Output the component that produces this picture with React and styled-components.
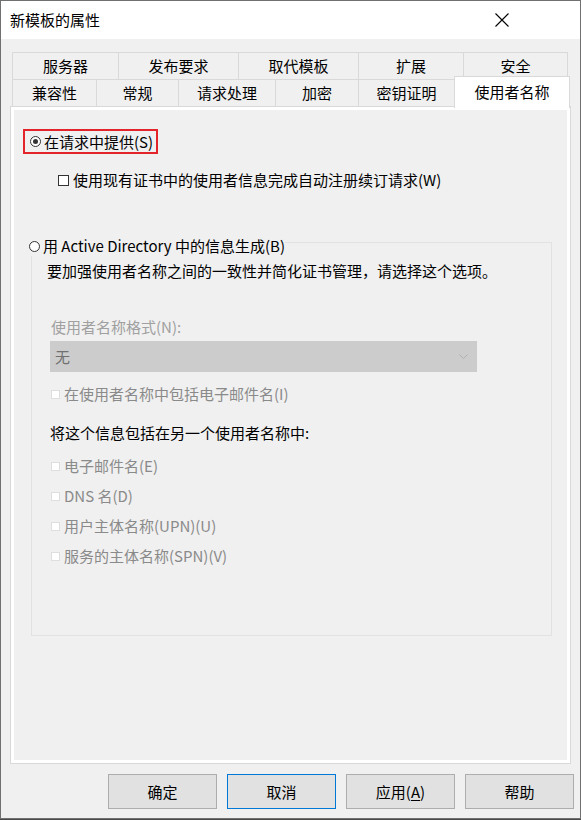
import React from 'react';
import styled, { createGlobalStyle } from 'styled-components';

const GlobalStyle = createGlobalStyle`
  html, body {
    margin: 0;
    padding: 0;
    background: #4a4a4a;
  }
  body {
    font-family: "Noto Sans CJK SC", "Noto Sans", sans-serif;
    font-size: 15px;
    color: #000;
  }
  * {
    box-sizing: border-box;
  }
`;

// Window chrome

const Window = styled.div`
  width: 581px;
  height: 819px;
  border: 1px solid #707070;
  background: #f0f0f0;
  display: flex;
  flex-direction: column;
`;

const TitleBar = styled.div`
  height: 38px;
  background: #fff;
  display: flex;
  align-items: center;
  justify-content: space-between;
  padding: 0 0 0 9px;
  line-height: 20px;
`;

const CloseButton = styled.div`
  width: 46px;
  height: 38px;
  display: flex;
  align-items: center;
  justify-content: center;
  margin-right: 55px;
`;

const Body = styled.div`
  flex: 1;
  padding: 13px 9px 0 9px;
  display: flex;
  flex-direction: column;
`;

// Tabs

const TabStrip = styled.div`
  margin-left: 2px;
  display: flex;
  flex-direction: column;
`;

const TabRow = styled.div`
  display: flex;
  align-items: flex-start;
  margin-top: ${(p) => (p.$first ? '0' : '-1px')};
`;

const Tab = styled.div`
  width: ${(p) => p.$w}px;
  height: 28px;
  margin-left: ${(p) => (p.$first ? '0' : '-1px')};
  border: 1px solid #d9d9d9;
  background: #f0f0f0;
  display: flex;
  align-items: center;
  justify-content: center;
  line-height: 20px;
  white-space: nowrap;
`;

const ActiveTab = styled(Tab)`
  position: relative;
  z-index: 2;
  height: 32px;
  margin-top: -3px;
  margin-bottom: -1px;
  background: #fff;
  border-bottom: none;
  padding-bottom: 1px;
`;

// Page

const Panel = styled.div`
  margin-top: -1px;
  height: 658px;
  border: 1px solid #d9d9d9;
  box-shadow: inset 0 0 0 3px #fff;
  background: #f0f0f0;
  padding: 22px 0 0 12px;
  display: flex;
  flex-direction: column;
  align-items: flex-start;
`;

const Highlight = styled.div`
  border: 2px solid #e3242b;
  height: 25px;
  width: 135px;
  padding-left: 5px;
  display: flex;
  align-items: center;
`;

const Choice = styled.label`
  display: flex;
  align-items: center;
  gap: ${(p) => p.$gap || 3}px;
  line-height: 20px;
  height: 20px;
  white-space: nowrap;
  color: ${(p) => (p.$disabled ? '#8a8a8a' : '#000')};
  margin-left: ${(p) => p.$indent || 0}px;
  margin-top: ${(p) => p.$top || 0}px;
`;

const Radio = styled.span`
  width: 11px;
  height: 11px;
  border-radius: 50%;
  border: 1px solid #333;
  background: #fff;
  display: flex;
  align-items: center;
  justify-content: center;
  flex: none;

  &::after {
    content: '';
    width: 5px;
    height: 5px;
    border-radius: 50%;
    background: ${(p) => (p.$checked ? '#333' : 'transparent')};
  }
`;

const Box = styled.span`
  width: ${(p) => (p.$disabled ? 9 : 11)}px;
  height: ${(p) => (p.$disabled ? 9 : 11)}px;
  border: 1px solid ${(p) => (p.$disabled ? '#dedede' : '#333')};
  background: #fff;
  flex: none;
`;

const GroupBox = styled.fieldset`
  margin: 38px 0 0 8px;
  padding: 0;
  width: 521px;
  border: 1px solid #e2e2e2;
  min-inline-size: 0;
`;

const GroupLegend = styled.legend`
  padding: 8px 0 0 0;
  margin-left: -3px;
  background: #f0f0f0;
`;

const GroupBody = styled.div`
  padding: 5px 0 69px 19px;
  display: flex;
  flex-direction: column;
  align-items: flex-start;
`;

const Text = styled.div`
  line-height: 20px;
  height: 20px;
  white-space: nowrap;
  color: ${(p) => (p.$disabled ? '#a0a0a0' : '#000')};
  margin-left: ${(p) => p.$indent || 0}px;
  margin-top: ${(p) => p.$top || 0}px;
`;

const Select = styled.div`
  margin: 4px 0 0 -1px;
  width: 427px;
  height: 31px;
  background: #cccccc;
  color: #707070;
  display: flex;
  align-items: center;
  justify-content: space-between;
  padding: 0 9px 0 5px;
  line-height: 20px;
`;

const CheckList = styled.div`
  margin-top: 13px;
  display: flex;
  flex-direction: column;
  gap: 10px;
`;

// Buttons

const ButtonRow = styled.div`
  margin: 10px -3px 0 0;
  display: flex;
  justify-content: flex-end;
  gap: 10px;
`;

const Button = styled.button`
  width: 109px;
  height: 35px;
  font: inherit;
  color: #000;
  background: #e1e1e1;
  border: 1px solid ${(p) => (p.$focused ? '#0078d7' : '#adadad')};
  padding: 0;
  line-height: 20px;

  u {
    text-decoration: underline;
    text-underline-offset: 2px;
  }
`;

const rowOne = [
  { label: '服务器', w: 107 },
  { label: '发布要求', w: 121 },
  { label: '取代模板', w: 121 },
  { label: '扩展', w: 106 },
  { label: '安全', w: 105 },
];

const rowTwo = [
  { label: '兼容性', w: 85 },
  { label: '常规', w: 83 },
  { label: '请求处理', w: 98 },
  { label: '加密', w: 84 },
  { label: '密钥证明', w: 97 },
];

const alsoInclude = [
  '电子邮件名(E)',
  'DNS 名(D)',
  '用户主体名称(UPN)(U)',
  '服务的主体名称(SPN)(V)',
];

function App() {
  return (
    <>
      <GlobalStyle />
      <Window>
        <TitleBar>
          <span>新模板的属性</span>
          <CloseButton>
            <svg width="14" height="14" viewBox="0 0 14 14">
              <path d="M0.5 0.5 L13.5 13.5 M13.5 0.5 L0.5 13.5" stroke="#000" strokeWidth="1.1" fill="none" />
            </svg>
          </CloseButton>
        </TitleBar>

        <Body>
          <TabStrip>
            <TabRow $first>
              {rowOne.map((t, i) => (
                <Tab key={t.label} $w={t.w} $first={i === 0}>{t.label}</Tab>
              ))}
            </TabRow>
            <TabRow>
              {rowTwo.map((t, i) => (
                <Tab key={t.label} $w={t.w} $first={i === 0}>{t.label}</Tab>
              ))}
              <ActiveTab $w={116}>使用者名称</ActiveTab>
            </TabRow>
          </TabStrip>

          <Panel>
            <Highlight>
              <Choice>
                <Radio $checked />
                在请求中提供(S)
              </Choice>
            </Highlight>

            <Choice $indent={35} $top={16} $gap={4}>
              <Box />
              使用现有证书中的使用者信息完成自动注册续订请求(W)
            </Choice>

            <GroupBox>
              <GroupLegend>
                <Choice>
                  <Radio />
                  用 Active Directory 中的信息生成(B)
                </Choice>
              </GroupLegend>
              <GroupBody>
                <Text $indent={-4}>要加强使用者名称之间的一致性并简化证书管理，请选择这个选项。</Text>
                <Text $disabled $top={36}>使用者名称格式(N):</Text>
                <Select>
                  <span>无</span>
                  <svg width="9" height="6" viewBox="0 0 9 6">
                    <path d="M0.5 0.5 L4.5 4.5 L8.5 0.5" stroke="#b0b0b0" fill="none" />
                  </svg>
                </Select>
                <Choice $disabled $gap={4} $top={12}>
                  <Box $disabled />
                  在使用者名称中包括电子邮件名(I)
                </Choice>
                <Text $indent={-1} $top={19}>将这个信息包括在另一个使用者名称中:</Text>
                <CheckList>
                  {alsoInclude.map((label) => (
                    <Choice key={label} $disabled $gap={4}>
                      <Box $disabled />
                      {label}
                    </Choice>
                  ))}
                </CheckList>
              </GroupBody>
            </GroupBox>
          </Panel>

          <ButtonRow>
            <Button>确定</Button>
            <Button $focused>取消</Button>
            <Button>应用(<u>A</u>)</Button>
            <Button>帮助</Button>
          </ButtonRow>
        </Body>
      </Window>
    </>
  );
}

export default App;
